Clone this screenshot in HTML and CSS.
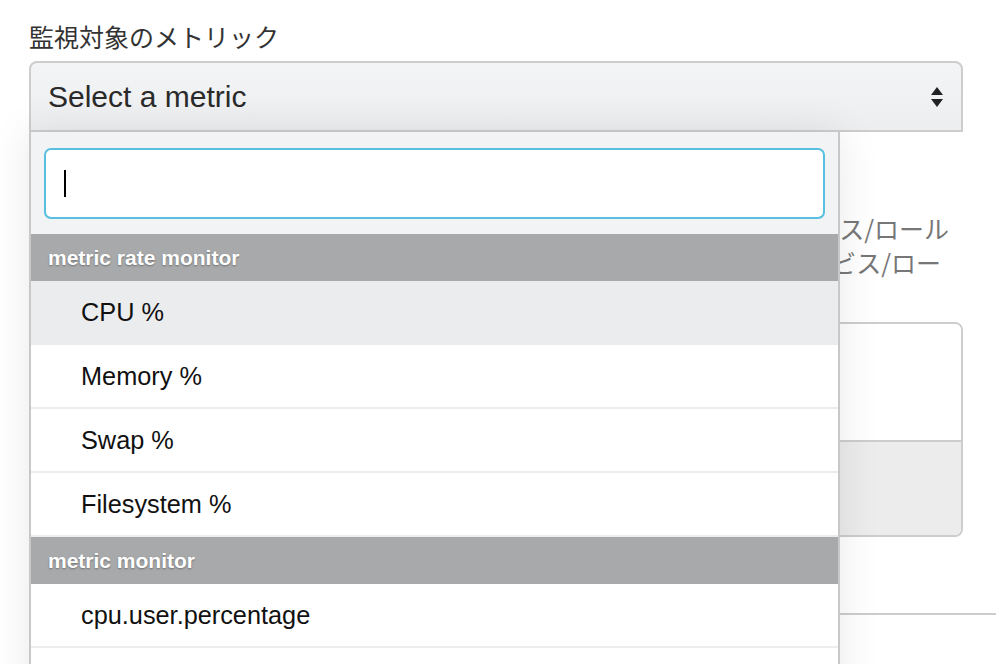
FILE: index.html
```html
<!DOCTYPE html>
<html lang="ja">
<head>
<meta charset="utf-8">
<title>監視対象のメトリック</title>
<link rel="stylesheet" href="styles.css">
</head>
<body>
<div class="page">
  <div class="field">
    <div class="label">監視対象のメトリック</div>
    <div class="select-wrap">
      <div class="select">
        <span class="select-text">Select a metric</span>
        <svg class="caret" width="12" height="20" viewBox="0 0 12 20"><path d="M6 0 L12 8 L0 8 Z M0 12 L12 12 L6 20 Z" fill="#222"/></svg>
      </div>
      <div class="dropdown">
        <div class="search-area">
          <div class="search"><span class="cursor"></span></div>
        </div>
        <div class="group">metric rate monitor</div>
        <div class="option active">CPU %</div>
        <div class="option">Memory %</div>
        <div class="option">Swap %</div>
        <div class="option">Filesystem %</div>
        <div class="group">metric monitor</div>
        <div class="option">cpu.user.percentage</div>
        <div class="option"></div>
      </div>
    </div>
  </div>
  <div class="scope">
    <div class="scope-line">監視対象のホストまたはサービス/ロール</div>
    <div class="scope-line second">すべてのホストまたはサービス/ロー</div>
  </div>
  <div class="box">
    <div class="box-top"></div>
    <div class="box-bottom"></div>
  </div>
  <div class="rule"></div>
</div>
</body>
</html>
```
FILE: styles.css
```css
html, body {
  margin: 0;
  background: #fff;
}
body {
  width: 996px;
  height: 664px;
  overflow: hidden;
  font-family: "Liberation Sans", Arial, "Noto Sans CJK JP", sans-serif;
  color: #222;
}
.page {
  padding: 21px 33px 0 29px;
}
.label {
  font-family: "Noto Sans CJK JP", sans-serif;
  font-size: 25px;
  line-height: 30px;
  color: #333;
  margin-bottom: 10px;
}
.select-wrap {
  position: relative;
}
.select {
  box-sizing: border-box;
  height: 71px;
  border: 2px solid #cdcdcd;
  border-radius: 8px 8px 0 0;
  background: linear-gradient(#f3f4f6, #eceef0);
  display: flex;
  align-items: center;
  justify-content: space-between;
  padding: 0 18px 0 17px;
}
.select-text {
  font-size: 30px;
  color: #2a2a2a;
}
.caret {
  display: block;
}
.dropdown {
  position: absolute;
  top: 71px;
  left: 0;
  width: 811px;
  box-sizing: border-box;
  border: 2px solid #c8c8c8;
  border-top: none;
  background: #fff;
  box-shadow: 0 0 40px rgba(0, 0, 0, 0.09);
  z-index: 5;
}
.search-area {
  background: #f2f3f5;
  padding: 16px 13px 15px 13px;
}
.search {
  box-sizing: border-box;
  height: 71px;
  border: 2px solid #57bfdf;
  border-radius: 7px;
  background: #fff;
  display: flex;
  align-items: center;
  padding-left: 18px;
}
.cursor {
  display: block;
  width: 2px;
  height: 27px;
  background: #000;
}
.group {
  height: 47px;
  background: #a8a9ab;
  color: #fff;
  font-weight: bold;
  font-size: 21px;
  display: flex;
  align-items: center;
  padding-left: 17px;
  text-shadow: 0 1px 2px rgba(0, 0, 0, 0.35);
}
.option {
  box-sizing: border-box;
  height: 64px;
  border-bottom: 2px solid #ededed;
  display: flex;
  align-items: center;
  padding-left: 50px;
  font-size: 25.3px;
  color: #111;
  background: #fff;
}
.option.active {
  background: #ebecee;
  border-bottom-color: #ebecee;
}
.scope {
  margin-top: 79px;
  font-family: "Noto Sans CJK JP", sans-serif;
  font-size: 25px;
  line-height: 34px;
  color: #777;
  text-align: right;
  padding-right: 14px;
  white-space: nowrap;
}
.scope-line.second {
  padding-right: 8px;
}
.box {
  margin-top: 43px;
  height: 215px;
  box-sizing: border-box;
  border: 2px solid #cdcdcd;
  border-radius: 8px;
  overflow: hidden;
  display: flex;
  flex-direction: column;
}
.box-top {
  height: 116px;
  background: #fff;
  border-bottom: 2px solid #cdcdcd;
}
.box-bottom {
  flex: 1;
  background: #ececec;
}
.rule {
  margin-top: 76px;
  margin-right: -33px;
  height: 2px;
  background: #cdcdcd;
}
```
